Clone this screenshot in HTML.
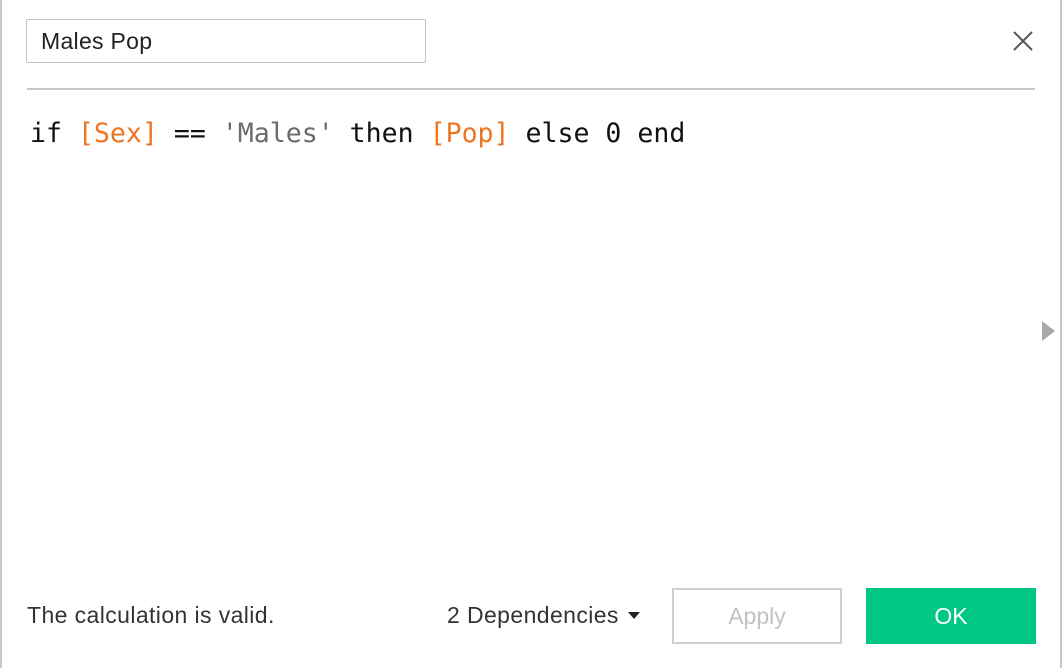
<!DOCTYPE html>
<html><head><style>
body{margin:0;width:1062px;height:668px;background:#fff;position:relative;overflow:hidden;font-family:"Liberation Sans",sans-serif}
.lb{position:absolute;left:0;top:0;width:2px;height:668px;background:#c8c8c8}
.rb{position:absolute;left:1060px;top:0;width:2px;height:668px;background:#c8c8c8}
.inp{position:absolute;left:26px;top:19px;width:400px;height:44px;border:1.5px solid #c4c4c4;border-radius:2px;box-sizing:border-box;font-size:23px;color:#222;padding-left:14px;line-height:42px;letter-spacing:0.3px}
.hr{position:absolute;left:27px;top:88px;width:1008px;height:2px;background:#c8c8c8}
.code{position:absolute;left:30px;top:116px;font-family:"DejaVu Sans Mono","Liberation Mono",monospace;font-size:26.55px;color:#111;white-space:pre;line-height:36px}
.o{color:#ee7421}.s{color:#6b6b6b}
.st{position:absolute;left:27px;top:602px;font-size:23px;color:#333;letter-spacing:0.4px}
.dep{position:absolute;left:447px;top:602px;font-size:23px;color:#333;letter-spacing:0.4px}
.apply{position:absolute;left:672px;top:588px;width:170px;height:56px;border:2px solid #d0d0d0;box-sizing:border-box;color:#c2c2c2;font-size:23px;text-align:center;line-height:52px}
.ok{position:absolute;left:866px;top:588px;width:170px;height:56px;background:#00c883;color:#fff;font-size:23px;text-align:center;line-height:56px}
</style></head><body>
<div class="lb"></div><div class="rb"></div>
<div class="inp">Males Pop</div>
<svg style="position:absolute;left:1012px;top:30px" width="22" height="22"><path d="M2 2L20 20M20 2L2 20" stroke="#555" stroke-width="2"/></svg>
<div class="hr"></div>
<div class="code">if <span class="o">[Sex]</span> == <span class="s">'Males'</span> then <span class="o">[Pop]</span> else 0 end</div>
<svg style="position:absolute;left:1042px;top:321px" width="14" height="20"><path d="M0 0L13 10L0 20Z" fill="#a8a8a8"/></svg>
<div class="st">The calculation is valid.</div>
<div class="dep">2 Dependencies <svg width="12" height="8" style="vertical-align:3px;margin-left:2px"><path d="M0 0L12 0L6 7Z" fill="#222"/></svg></div>
<div class="apply">Apply</div>
<div class="ok">OK</div>
</body></html>
